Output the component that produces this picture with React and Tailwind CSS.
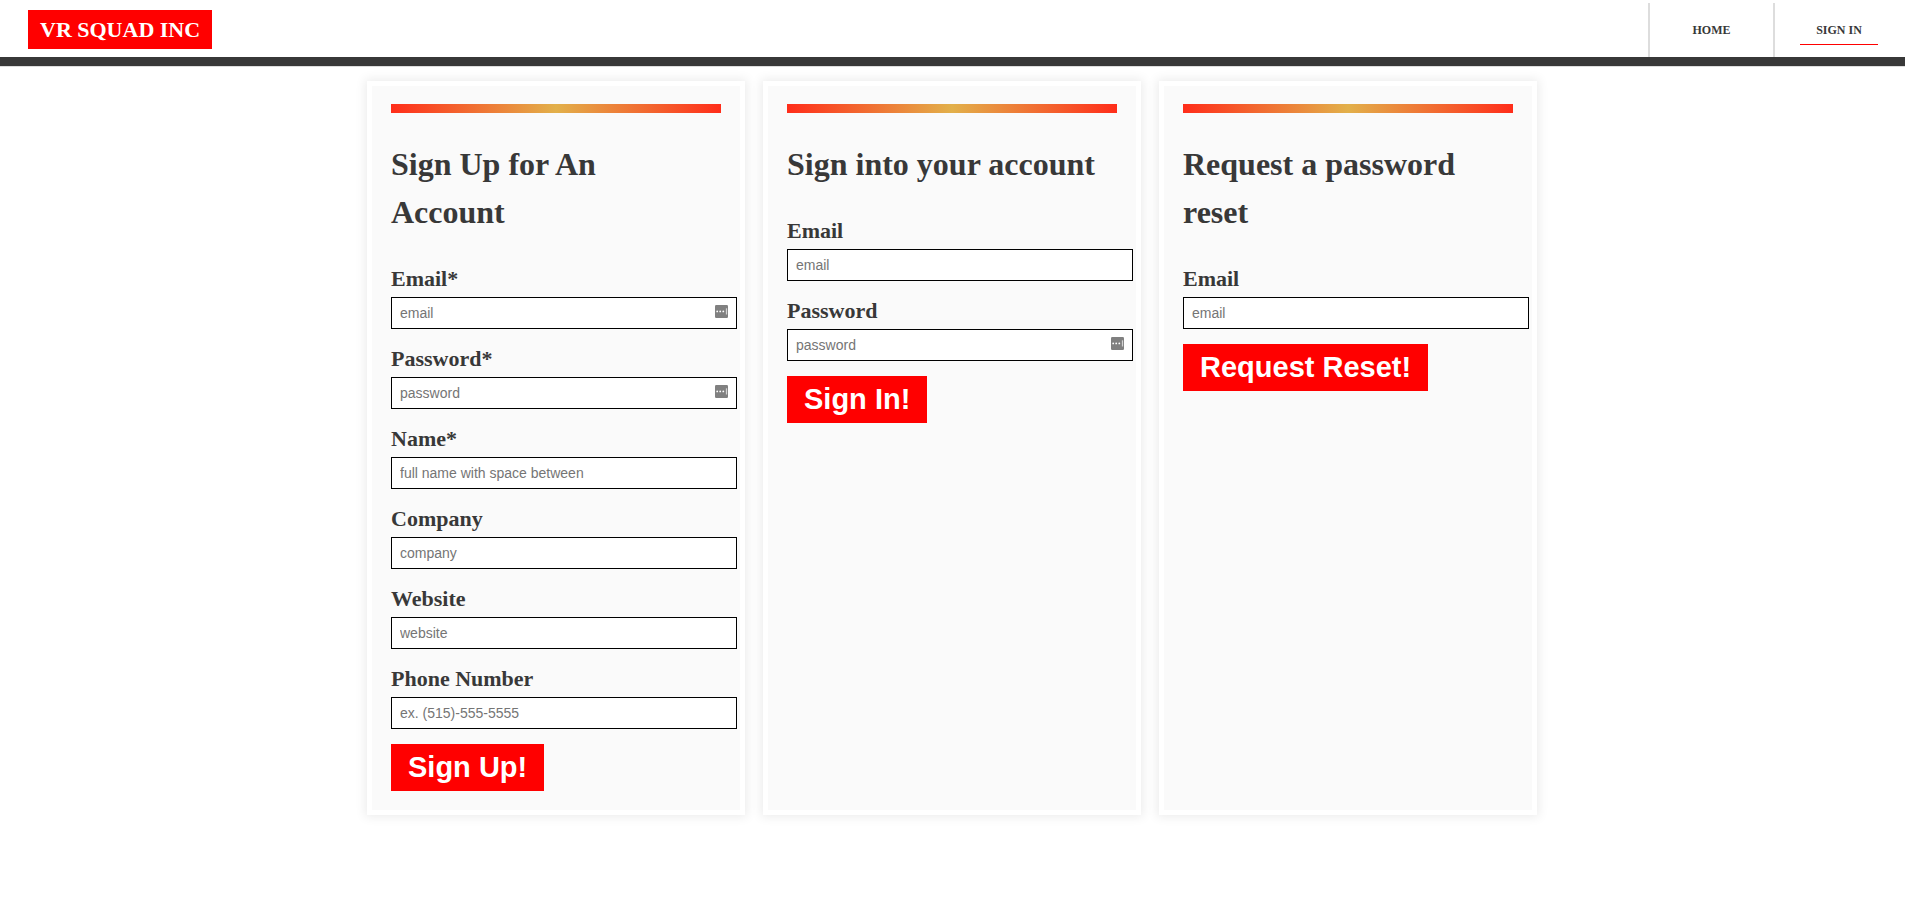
import React from "react";

const SERIF = "font-['Liberation_Serif','Times_New_Roman',serif]";

function AutofillIcon() {
  return (
    <svg
      className="pointer-events-none absolute right-[9px] top-[8px] h-[13px] w-[13px]"
      viewBox="0 0 13 13"
      aria-hidden="true"
    >
      <rect width="13" height="13" rx="1.2" fill="#808080" />
      <circle cx="2.2" cy="6.4" r="0.9" fill="#fff" />
      <circle cx="5.2" cy="6.4" r="0.9" fill="#fff" />
      <circle cx="8.3" cy="6.4" r="0.9" fill="#fff" />
      <rect x="10.9" y="3.3" width="1.2" height="6.2" fill="#d4d4d4" />
    </svg>
  );
}

function Field({ id, label, type = "text", placeholder, autofill }) {
  return (
    <div className="-mr-4">
      <label htmlFor={id} className="mb-[2px] block text-[22px] leading-8 font-bold">
        {label}
      </label>
      <div className="relative">
        <input
          id={id}
          type={type}
          placeholder={placeholder}
          className="block h-8 w-full border border-black bg-white px-2 font-['Liberation_Sans',Arial,sans-serif] text-[14px] text-black placeholder:text-[#757575]"
        />
        {autofill && <AutofillIcon />}
      </div>
    </div>
  );
}

function Card({ title, fields, action }) {
  return (
    <section className="flex-1 border-[5px] border-white bg-[#fafafa] px-[19px] pt-[18px] pb-[19px] shadow-[0_0_10px_2px_rgba(0,0,0,0.08)]">
      <div className="h-[9px] bg-[linear-gradient(to_right,#ff2d1a,#e2b04a,#ff2d1a)]" />
      <h1 className="my-[27px] pr-3 text-[32px] leading-[48px] font-bold">{title}</h1>
      <form onSubmit={(e) => e.preventDefault()}>
        <div className="flex flex-col gap-[14px]">
          {fields.map((f) => (
            <Field key={f.id} {...f} />
          ))}
        </div>
        <button
          type="submit"
          className="mt-[15px] block bg-[#ff0000] px-[17px] py-[7px] font-['Liberation_Sans',Arial,sans-serif] text-[29px] leading-[33px] font-bold text-white"
        >
          {action}
        </button>
      </form>
    </section>
  );
}

const CARDS = [
  {
    title: "Sign Up for An Account",
    action: "Sign Up!",
    fields: [
      { id: "up-email", label: "Email*", type: "email", placeholder: "email", autofill: true },
      { id: "up-password", label: "Password*", type: "password", placeholder: "password", autofill: true },
      { id: "up-name", label: "Name*", placeholder: "full name with space between" },
      { id: "up-company", label: "Company", placeholder: "company" },
      { id: "up-website", label: "Website", placeholder: "website" },
      { id: "up-phone", label: "Phone Number", type: "tel", placeholder: "ex. (515)-555-5555" },
    ],
  },
  {
    title: "Sign into your account",
    action: "Sign In!",
    fields: [
      { id: "in-email", label: "Email", type: "email", placeholder: "email" },
      { id: "in-password", label: "Password", type: "password", placeholder: "password", autofill: true },
    ],
  },
  {
    title: "Request a password reset",
    action: "Request Reset!",
    fields: [{ id: "reset-email", label: "Email", type: "email", placeholder: "email" }],
  },
];

export default function App() {
  return (
    <div className={`${SERIF} min-h-screen bg-white pr-[3px] text-[#383838]`}>
      <header className="flex items-end justify-between border-b-[9px] border-[#383838] pr-[2px] pl-7 shadow-[0_1px_0_#dddddd]">
        <a
          href="#"
          className="mt-[10px] mb-2 block bg-[#ff0000] px-3 text-[22px] leading-[39px] font-bold text-white"
        >
          VR SQUAD INC
        </a>
        <nav className="flex h-[54px] text-[12px] leading-[15px] font-bold">
          <div className="flex w-[125px] items-start justify-center border-l-2 border-[#dddddd] pt-5">
            <a href="#" className="border-b border-transparent px-4 pb-[6px]">HOME</a>
          </div>
          <div className="flex w-[130px] items-start justify-center border-l-2 border-[#dddddd] pt-5">
            <a href="#" className="border-b border-[#ff0000] px-4 pb-[6px]">SIGN IN</a>
          </div>
        </nav>
      </header>
      <main className="mx-auto mt-[15px] flex max-w-[1171px] gap-[18px] pr-px">
        {CARDS.map((c) => (
          <Card key={c.title} {...c} />
        ))}
      </main>
    </div>
  );
}
